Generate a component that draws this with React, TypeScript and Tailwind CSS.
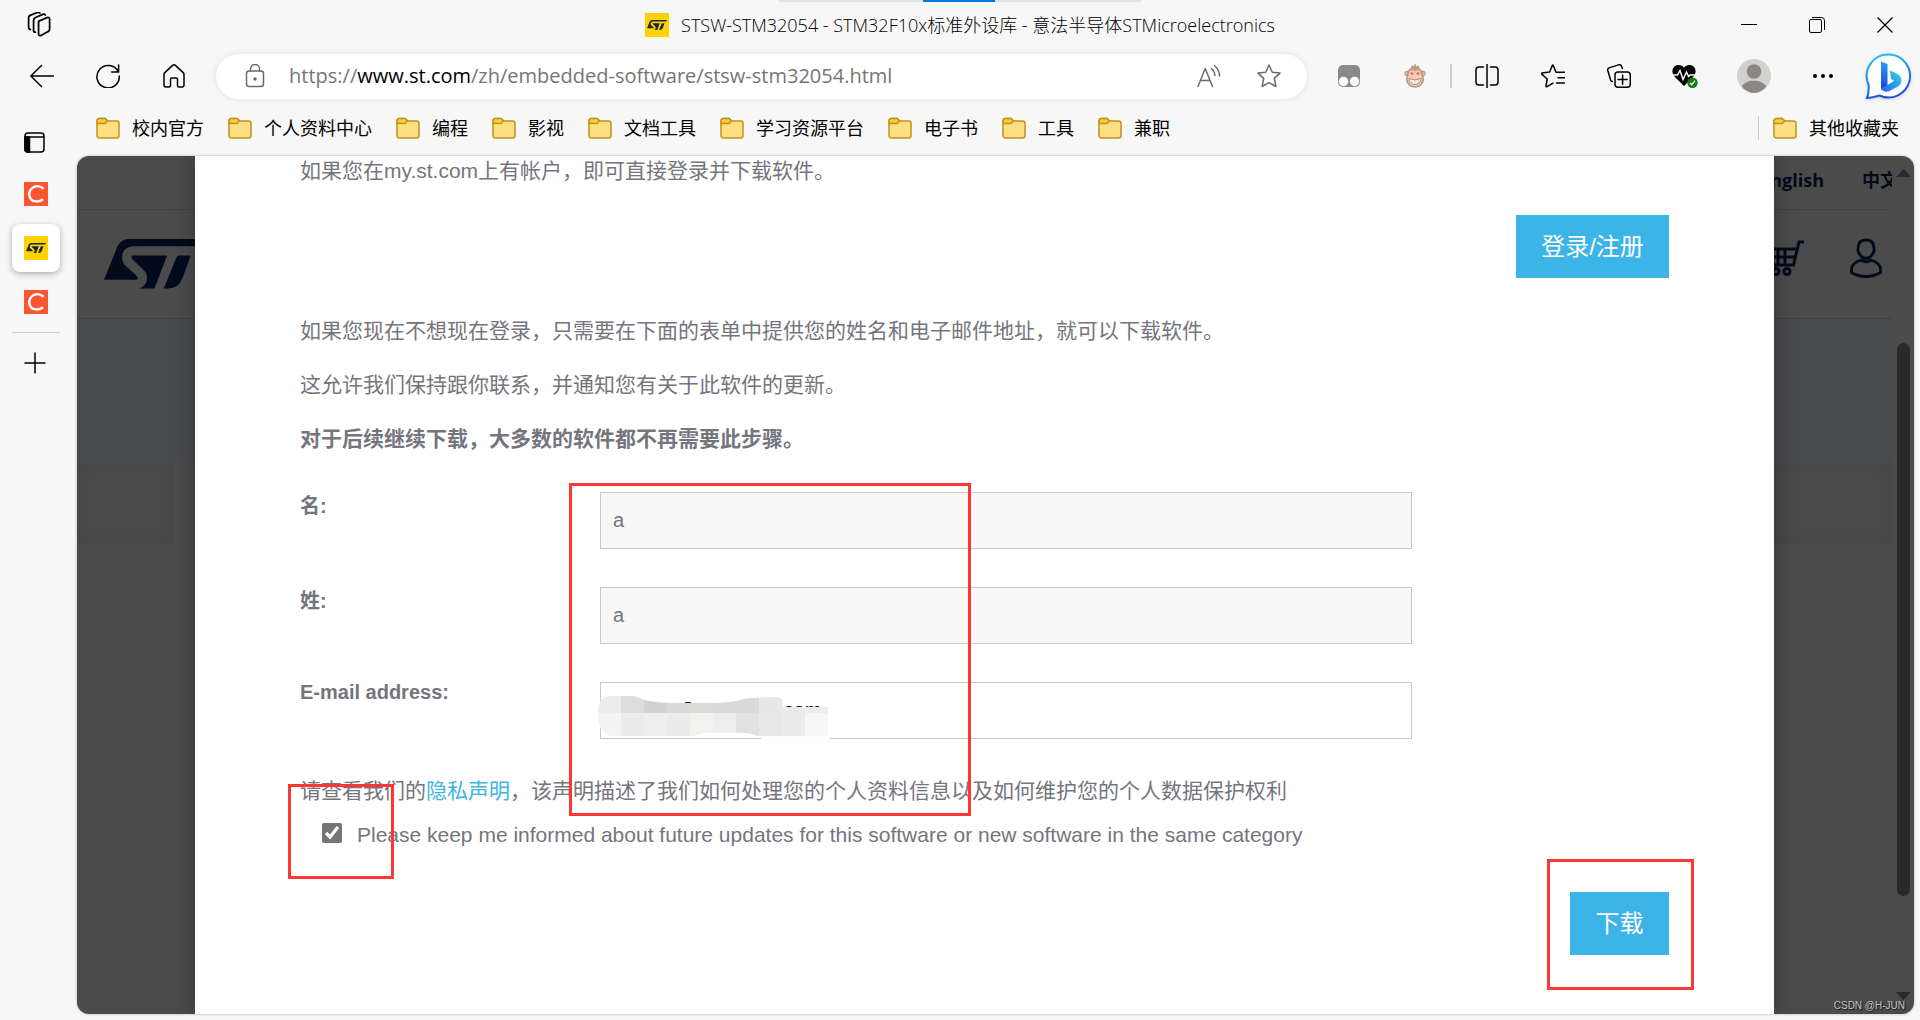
import React from "react";

const uiFont = "font-['Open_Sans','Noto_Sans_CJK_SC',sans-serif]";
const pageFont = "font-['Liberation_Sans','Noto_Sans_CJK_SC',sans-serif]";

const folders = ["校内官方", "个人资料中心", "编程", "影视", "文档工具", "学习资源平台", "电子书", "工具", "兼职"];

function FolderIcon() {
  return (
    <svg className="size-6 shrink-0" viewBox="0 0 24 24" fill="none" stroke="#c0921a" strokeWidth="1.5">
      <path d="M1 5a2.500 2.500 0 0 1 2.500-2.500H9l3 2.500h8.500A2.500 2.500 0 0 1 23 7.500v12a2.500 2.500 0 0 1-2.500 2.500h-17A2.500 2.500 0 0 1 1 19.500Z" fill="#ffdf84" />
      <path d="M1 5a2.500 2.500 0 0 1 2.500-2.500H9L11.500 5 9 7.500H1Z" fill="#fccb3d" />
    </svg>
  );
}

function Folder({ label }: { label: string }) {
  return (
    <a href="#" className="flex items-center gap-3 whitespace-nowrap text-lg leading-6 text-black">
      <FolderIcon />
      {label}
    </a>
  );
}

function StMark({ className, fill }: { className: string; fill: string }) {
  return (
    <svg className={className} viewBox="312 355 290 146" fill={fill}>
      <path d="M385 355H600L591 376H400C368 376 356 405 372 430L408 463Q416 474 405 474H312L350 380Q360 355 385 355Z" />
      <path d="M398 403H497L460 500H416C440 490 445 465 430 448L395 414Q388 403 398 403Z" />
      <path d="M532 403H566L542 470Q530 500 500 500H487L524 409Q526 403 532 403Z" />
    </svg>
  );
}

function StFavicon() {
  return (
    <span className="flex size-6 shrink-0 items-center justify-center bg-[#ffd200]">
      <StMark className="h-[10px] w-5" fill="#1c2540" />
    </span>
  );
}

function CFavicon() {
  return (
    <svg className="size-6" viewBox="0 0 24 24">
      <rect width="24" height="24" fill="#fc5531" />
      <path d="M18.800 6.200C16.500 4.200 12.500 3.600 9.500 5.200 6.300 7 5 10 5.300 13.200c.4 3.800 3.200 6 6.700 6.200 2.600.2 4.700-.4 6.300-1.700" fill="none" stroke="#fff" strokeWidth="2.400" strokeLinecap="round" />
    </svg>
  );
}

function ToolButton({ label, children }: { label: string; children: React.ReactNode }) {
  return (
    <button type="button" aria-label={label} className="flex h-12 w-[66px] shrink-0 items-center justify-center">
      {children}
    </button>
  );
}

function LineIcon({ children, className = "size-6", width = 1.5 }: { children: React.ReactNode; className?: string; width?: number }) {
  return (
    <svg className={className} viewBox="0 0 24 24" fill="none" stroke="currentColor" strokeWidth={width} strokeLinecap="round" strokeLinejoin="round">
      {children}
    </svg>
  );
}

function TitleBar() {
  return (
    <header className="relative flex h-[50px] shrink-0 items-center justify-between">
      <div className="absolute top-0 left-1/2 flex h-[2px] w-[362px] -translate-x-1/2 justify-center bg-[#e5e5e5]">
        <span className="ml-[-2px] w-[72px] bg-[#0078d7]" />
      </div>
      <button type="button" aria-label="工作区" className="flex h-full w-[78px] items-center justify-center">
        <LineIcon className="size-[26px]" width={1.600}>
          <path d="M11.600 8.600 19.400 5.200Q21.800 4.400 21.800 6.800V16Q21.800 17.400 20.400 18.100L13.800 21.600Q11.600 22.400 11.600 20V9.800Q11.600 8 13 7.800" />
          <path d="M8.600 18.600Q7 18.600 7 17V7.600Q7 6 8.400 5.300L15.400 2.200Q17.400 1.600 17.800 2.800" />
          <path d="M4 16.200Q2.400 15.800 2.400 14.200V5.200Q2.400 3.800 3.800 3.100L10 .6Q12.200 0 12.800 1" />
        </LineIcon>
      </button>
      <h1 className="absolute inset-x-0 mx-auto flex w-fit items-center gap-3 text-lg leading-6 font-light whitespace-nowrap text-black">
        <StFavicon />
        STSW-STM32054 - STM32F10x标准外设库 - 意法半导体STMicroelectronics
      </h1>
      <div className="flex pr-[2px]">
        <ToolButton label="最小化">
          <svg className="size-4" viewBox="0 0 16 16" stroke="#000"><path d="M0 7.500h16" /></svg>
        </ToolButton>
        <div className="px-[2px]">
          <ToolButton label="还原">
            <svg className="size-4" viewBox="0 0 16 16" fill="none" stroke="#000">
              <rect x=".5" y="2.500" width="12" height="13" rx="1.500" />
              <path d="M3 .5h9.500a3 3 0 0 1 3 3V13" />
            </svg>
          </ToolButton>
        </div>
        <ToolButton label="关闭">
          <svg className="size-4" viewBox="0 0 16 16" stroke="#000" strokeWidth="1.200"><path d="M.5.500l15 15M15.500.500l-15 15" /></svg>
        </ToolButton>
      </div>
    </header>
  );
}

function Toolbar() {
  return (
    <nav className="flex h-[52px] shrink-0 items-center pl-[9px] text-black">
      <ToolButton label="返回"><LineIcon><path d="M23.500 12H.8M11.500 1.500.8 12l10.700 10.500" /></LineIcon></ToolButton>
      <ToolButton label="刷新"><LineIcon><path d="M22.200 7.800A11.200 11.200 0 1 0 23.300 12M22.600 1v7h-7" /></LineIcon></ToolButton>
      <ToolButton label="主页">
        <LineIcon><path d="M10.600 1.400Q12 .2 13.400 1.400L21.200 8.600Q22 9.400 22 10.500V21Q22 23 20 23H17Q15.500 23 15.500 21.500V15.500Q15.500 14 14 14H10Q8.500 14 8.500 15.500V21.500Q8.500 23 7 23H4Q2 23 2 21V10.500Q2 9.400 2.800 8.600Z" /></LineIcon>
      </ToolButton>
      <div className="ml-[9px] flex h-[45px] min-w-0 flex-1 items-center rounded-full bg-white pr-[26px] pl-[27px] text-[#6b6b6b] shadow-[0_0_6px_rgba(0,0,0,0.1)]">
        <LineIcon>
          <rect x="3.500" y="7" width="17" height="15.500" rx="2.500" />
          <path d="M7.500 7V5a4.500 4.500 0 0 1 9 0v2" />
          <circle cx="12" cy="15" r="1" fill="currentColor" />
        </LineIcon>
        <div className="relative ml-[22px] min-w-0 flex-1 text-xl leading-7">
          <input aria-label="地址栏" readOnly defaultValue="https://www.st.com/zh/embedded-software/stsw-stm32054.html" className="w-full bg-transparent text-transparent outline-none" />
          <span aria-hidden="true" className="pointer-events-none absolute inset-0 whitespace-nowrap text-[#767676]">
            https://<span className="text-black">www.st.com</span>/zh/embedded-software/stsw-stm32054.html
          </span>
        </div>
        <button type="button" aria-label="大声朗读" className="mr-9">
          <LineIcon>
            <path d="M1 22.500 8.200 4.500 15.500 22.500M3.600 16.500h9.200M14.500 4.500q3 2.500 3.500 7M17.500 1.500q4.800 4 5 10.500" />
          </LineIcon>
        </button>
        <button type="button" aria-label="收藏此页">
          <LineIcon><path d="m12 1 3.300 7.200 7.700.9-5.700 5.300 1.600 8.100-6.900-3.900-6.900 3.900 1.600-8.100L1 9.100l7.700-.9Z" /></LineIcon>
        </button>
      </div>
      <div className="flex items-center pl-[9px]">
        <ToolButton label="扩展">
          <svg className="size-6" viewBox="0 0 24 24">
            <rect x="1" y="1" width="22" height="22" rx="5" fill="#8a8a8a" />
            <circle cx="6.500" cy="17.500" r="4.700" fill="#fff" />
            <circle cx="17.500" cy="17.500" r="4.700" fill="#fff" />
          </svg>
        </ToolButton>
        <ToolButton label="脚本">
          <svg className="size-6" viewBox="0 0 24 24">
            <path d="M8.500 4 9 1.500l2 1.500L12 .2 13.500 3l2-1.200L15.500 4" fill="#c79f8e" stroke="#a58a7d" strokeWidth=".6" />
            <circle cx="4" cy="9.500" r="2.300" fill="#ecc0a6" stroke="#b6917d" />
            <circle cx="20" cy="9.500" r="2.300" fill="#ecc0a6" stroke="#b6917d" />
            <path d="M12 3.500c5 0 7.600 2.800 7.600 6.800 0 1.700 1 2.700 1 5 0 4.600-3.800 8-8.600 8s-8.600-3.400-8.600-8c0-2.300 1-3.300 1-5C4.400 6.300 7 3.500 12 3.500Z" fill="#c99b86" stroke="#a58a7d" strokeWidth=".6" />
            <path d="M12 7.500C9.500 4.800 5.800 6.800 6 9.800c.1 1.700-1.200 2.900-1.200 5.200 0 4.200 3.200 7.200 7.200 7.200s7.200-3 7.200-7.200c0-2.300-1.300-3.500-1.200-5.200.2-3-3.500-5-6-2.300Z" fill="#f5cdb2" />
            <circle cx="9" cy="9.500" r="1.700" fill="#ff8f8f" /><circle cx="15" cy="9.500" r="1.700" fill="#ff8f8f" />
            <circle cx="9" cy="9.500" r=".7" fill="#e02d2d" /><circle cx="15" cy="9.500" r=".7" fill="#e02d2d" />
            <path d="M6 14.500q6 3 12 0c0 3.500-2.500 6-6 6s-6-2.500-6-6Z" fill="#fff" stroke="#96806f" strokeWidth=".9" />
            <path d="M9 16v4M12 16.500v4M15 16v4" stroke="#b5a79d" strokeWidth=".6" />
          </svg>
        </ToolButton>
        <span className="mx-[2px] h-6 w-[2px] bg-[#cfcfcf]" />
        <ToolButton label="拆分屏幕"><LineIcon><path d="M12 .5v23M8.500 3H4Q1 3 1 6v12q0 3 3 3h4.500M15.500 3H20q3 0 3 3v12q0 3-3 3h-4.500" /></LineIcon></ToolButton>
        <ToolButton label="收藏夹">
          <LineIcon><path d="M15 8.200 12.200 1.200Q11.800.6 11.400 1.200L8.600 8 1 9Q.2 9.500.8 10.100L6.200 15 5 22Q5 23.200 6 22.600L12 19.200M15 8.200h8.500M17 13.800h6.500M15.500 19h8" /></LineIcon>
        </ToolButton>
        <ToolButton label="集锦">
          <LineIcon>
            <path d="M5.300 17.600Q4 17.500 3.600 16L.8 6.500Q.3 4.600 2 3.900L11.500.9Q13.600.3 14.400 1.900L15.400 4.500" />
            <rect x="8" y="8" width="15.300" height="15.300" rx="3" />
            <path d="M15.600 11v9.200M11 15.600h9.200" />
          </LineIcon>
        </ToolButton>
        <ToolButton label="浏览器概要">
          <svg className="h-6 w-[26px]" viewBox="0 0 26 24">
            <path d="M12 22 2.500 12.500C-2 7 1.500 1 6.500 1c2.500 0 4.300 1 5.500 2.700C13.200 2 15 1 17.500 1c5 0 8.500 6 4 11.500Z" fill="#000" />
            <path d="M0 11h5.500l2.500-4.500 3 9 3.500-7.500 2 4.500 1.500-1.500h7" fill="none" stroke="#f7f7f7" strokeWidth="1.500" />
            <circle cx="20.500" cy="18.800" r="5.200" fill="#107c10" />
            <path d="m18 19 1.800 1.800L23 16.800" fill="none" stroke="#fff" strokeWidth="1.400" />
          </svg>
        </ToolButton>
        <div className="px-[3px]">
          <ToolButton label="个人资料">
            <svg className="size-[34px]" viewBox="0 0 34 34">
              <circle cx="17" cy="17" r="17" fill="#d3d1ce" />
              <circle cx="17" cy="12.500" r="7.300" fill="#8b8784" />
              <path d="M4.800 27.500C7 23.800 11.500 21.800 17 21.800s10 2 12.200 5.700A17 17 0 0 1 17 34 17 17 0 0 1 4.800 27.500Z" fill="#8b8784" />
            </svg>
          </ToolButton>
        </div>
        <ToolButton label="更多">
          <svg className="size-6" viewBox="0 0 24 24"><circle cx="4" cy="12" r="2" /><circle cx="12" cy="12" r="2" /><circle cx="20" cy="12" r="2" /></svg>
        </ToolButton>
        <button type="button" aria-label="Bing" className="flex h-12 w-16 items-center justify-center">
          <svg className="size-12 drop-shadow" viewBox="0 0 48 48">
            <defs>
              <linearGradient id="ring" x1="0" y1="0" x2=".3" y2="1"><stop offset="0" stopColor="#23cdf3" /><stop offset="1" stopColor="#1d51dc" /></linearGradient>
              <linearGradient id="stem" x1="0" y1="0" x2="0" y2="1"><stop offset="0" stopColor="#2a9df2" /><stop offset="1" stopColor="#1947d1" /></linearGradient>
              <linearGradient id="bowl" x1="0" y1="1" x2="1" y2="0"><stop offset="0" stopColor="#2362e8" /><stop offset=".6" stopColor="#28a8ee" /><stop offset="1" stopColor="#37e0c0" /></linearGradient>
            </defs>
            <path d="M25 2.500a21.500 21.500 0 1 1-9.500 41C11 44.800 7 45.800 3 46c1.700-4 2-9 1.500-13.500A21.500 21.500 0 0 1 25 2.500Z" fill="#fff" stroke="url(#ring)" strokeWidth="2" />
            <path d="M17 9.500 23.500 12v21.500L17 37.300Z" fill="url(#stem)" />
            <path d="M26 18.500 33.500 22q4 2 4 6.500 0 4-4 6.300l-8 4.200q-4 1.800-7.500-.7L17 37.300l13-8.500-3-2Z" fill="url(#bowl)" />
          </svg>
        </button>
      </div>
    </nav>
  );
}

function Bookmarks() {
  return (
    <nav className="flex h-[54px] shrink-0 items-center justify-between pr-[21px] pb-[2px] pl-24">
      <div className="flex gap-6">
        {folders.map((name) => <Folder key={name} label={name} />)}
      </div>
      <div className="flex items-center border-l border-[#cfcfcf] pl-[14px]">
        <Folder label="其他收藏夹" />
      </div>
    </nav>
  );
}

function SideTabs() {
  return (
    <aside className="-mt-[26px] flex w-[77px] shrink-0 flex-col items-start pl-3">
      <button type="button" aria-label="标签页操作菜单" className="flex h-6 w-[45px] items-center justify-center">
        <svg className="size-[21px]" viewBox="0 0 21 21" fill="none" stroke="#000" strokeWidth="1.500">
          <rect x="1" y="1" width="19" height="19" rx="3" />
          <path d="M1 5h19" />
          <path d="M1 5h4.500v15H3.500Q1 20 1 17.500Z" fill="#000" />
        </svg>
      </button>
      <button type="button" aria-label="CSDN" className="mt-4 flex size-12 items-center justify-center"><CFavicon /></button>
      <button type="button" aria-label="STMicroelectronics" className="mt-[6px] flex size-12 items-center justify-center rounded-lg bg-white shadow-[0_2px_6px_rgba(0,0,0,0.3)]"><StFavicon /></button>
      <button type="button" aria-label="CSDN" className="mt-[6px] flex size-12 items-center justify-center"><CFavicon /></button>
      <span className="mt-[6px] h-px w-12 bg-[#cccccc]" />
      <button type="button" aria-label="新建标签页" className="mt-[6px] flex h-12 w-[46px] items-center justify-center">
        <svg className="size-6" viewBox="0 0 24 24" stroke="#000" strokeWidth="1.500"><path d="M12 1.500v21M1.500 12h21" /></svg>
      </button>
    </aside>
  );
}

function Backdrop() {
  return (
    <div className="text-[#020b1c]">
      <div className={`flex h-[54px] items-center justify-end overflow-hidden border-b border-[#434343] text-lg leading-5 font-bold whitespace-nowrap ${uiFont}`}>
        <a href="#" className="pb-[6px]">English</a>
        <a href="#" className="-mr-[6px] ml-[38px] pb-[6px]">中文</a>
      </div>
      <div className="flex h-[109px] items-center justify-between border-b border-[#3e4244] pr-[10px] pl-[27px]">
        <StMark className="h-[50px] w-[99px]" fill="#020b1c" />
        <div className="flex items-center gap-[46px] pb-3">
          <svg className="h-9 w-10" viewBox="0 0 40 36" fill="none" stroke="#020b1c" strokeWidth="3">
            <path d="M40 2h-5l-5.500 23H10L4 9h28" />
            <path d="M6 17h25M14 9v16M21 9v16" />
            <circle cx="12" cy="31.500" r="3" /><circle cx="23" cy="31.500" r="3" />
          </svg>
          <svg className="h-10 w-8" viewBox="0 0 32 40" fill="none" stroke="#020b1c" strokeWidth="2.800">
            <path d="M8.500 8Q9 2 16 2t7.500 6l.8 4Q22 20 16 20.500 10 20 7.700 12Z" />
            <path d="M11 22Q2 25 1.500 31v3.500Q8 38.500 16 38.500T30.500 34.500V31Q30 25 21 22q-5 3.500-10 0Z" />
          </svg>
        </div>
      </div>
      <div className="h-36 bg-[#494a4c]" />
      <div className="flex justify-between">
        <span className="h-[81px] w-24 bg-[#4a4a4a] shadow-[inset_0_0_16px_rgba(0,0,0,0.06)]" />
        <span className="h-[81px] w-[118px] bg-[#4a4a4a] shadow-[inset_0_0_16px_rgba(0,0,0,0.06)]" />
      </div>
    </div>
  );
}

const mosaicTop = ["#ededed", "#dcdcdc", "#d2d2d2", "#dadada", "#dcdbd9", "#d9d9db", "#dadadb", "#e7e7e7", "#e9eaeb", "#ecedef"];
const mosaicBottom = ["#f4f4f4", "#ebebeb", "#eeeeee", "#ebebeb", "#f2f2ef", "#eeeeee", "#e2e2e2", "#e8e8e8", "#ebebeb", "#f7f7f7"];

function Mosaic() {
  return (
    <svg aria-hidden="true" className="pointer-events-none absolute top-[14px] -left-[2px] h-[45px] w-[232px]" viewBox="0 0 232 45">
      <clipPath id="smudge">
        <path d="M0 14Q0 3 10 0H36L50 5 70 7H110Q135 7 145 3 160 1 180 1 186 3 184 11H230V42H162Q155 37 145 37H105L95 40H12Q0 34 0 24Z" />
      </clipPath>
      <path d="M163 37H232V44H163Z" fill="#fdfdfd" />
      <g clipPath="url(#smudge)">
        {mosaicTop.map((c, i) => <rect key={i} x={i * 23} y="0" width="23" height="17" fill={c} />)}
        {mosaicBottom.map((c, i) => <rect key={i} x={i * 23} y="17" width="23" height="23" fill={c} />)}
      </g>
      <path d="M87 6.500h6" stroke="#222" />
    </svg>
  );
}

const inputClass = "h-[57px] w-full border border-[#c8c8c8] px-3 text-xl text-[#75757d] outline-none";
const mark = "pointer-events-none absolute border-[3px] border-[#fc3737]";
const cta = "bg-[#3cb4e7] text-2xl text-white h-[63px]";

function DownloadDialog() {
  return (
    <section role="dialog" aria-label="获取软件" className={`w-[87%] bg-white px-[105px] pt-px text-[21px] leading-7 text-[#75757d] shadow-[0_0_20px_rgba(0,0,0,0.3)] ${pageFont}`}>
      <p>如果您在my.st.com上有帐户，即可直接登录并下载软件。</p>
      <div className="mt-[30px] flex justify-end">
        <button type="button" className={`${cta} w-[153px]`}>登录/注册</button>
      </div>
      <p className="mt-[39px]">如果您现在不想现在登录，只需要在下面的表单中提供您的姓名和电子邮件地址，就可以下载软件。</p>
      <p className="mt-[26px]">这允许我们保持跟你联系，并通知您有关于此软件的更新。</p>
      <p className="mt-[26px] font-bold">对于后续继续下载，大多数的软件都不再需要此步骤。</p>
      <form className="mt-[39px]" onSubmit={(e) => e.preventDefault()}>
        <div className="grid grid-cols-[300px_1fr] gap-y-[38px] pr-[257px]">
          <label htmlFor="first" className="text-xl leading-7 font-bold">名:</label>
          <div className="relative">
            <input id="first" defaultValue="a" className={`${inputClass} bg-[#f8f8f8]`} />
            <span className={`${mark} -top-[9px] -left-[31px] z-10 h-[333px] w-[402px]`} />
          </div>
          <label htmlFor="last" className="text-xl leading-7 font-bold">姓:</label>
          <input id="last" defaultValue="a" className={`${inputClass} bg-[#f8f8f8]`} />
          <label htmlFor="email" className="text-xl leading-5 font-bold">E-mail address:</label>
          <div className="relative">
            <input id="email" defaultValue=".com" className="h-[57px] w-full border border-[#c8c8c8] pl-[177px] text-xl text-black outline-none" />
            <Mosaic />
          </div>
        </div>
        <p className="mt-[38px]">
          请查看我们的<a href="#" className="text-[#3cb4e7]">隐私声明</a>，该声明描述了我们如何处理您的个人资料信息以及如何维护您的个人数据保护权利
        </p>
        <div className="relative mt-4 flex items-start pl-[22px]">
          <input id="updates" type="checkbox" defaultChecked className="mt-[2px] size-5 accent-[#767676]" />
          <label htmlFor="updates" className="ml-[15px] leading-7">Please keep me informed about future updates for this software or new software in the same category</label>
          <span className={`${mark} -top-[37px] -left-3 h-[95px] w-[106px]`} />
        </div>
        <div className="mt-[43px] flex justify-end">
          <div className="relative">
            <button type="submit" className={`${cta} w-[99px]`}>下载</button>
            <span className={`${mark} -top-[33px] -right-[25px] h-[131px] w-[147px]`} />
          </div>
        </div>
      </form>
    </section>
  );
}

function Scrollbar() {
  return (
    <div className="flex w-[22px] shrink-0 flex-col items-center pt-[13px] pb-[14px]">
      <svg className="h-2 w-[15px]" viewBox="0 0 15 8" fill="#292929"><path d="M0 8 7.500 0 15 8Z" /></svg>
      <div className="flex w-full flex-1 flex-col items-center">
        <span className="flex-[166]" />
        <span className="w-[13px] flex-[553] rounded-full bg-[#292929]" />
        <span className="flex-[96]" />
      </div>
      <svg className="h-2 w-[15px]" viewBox="0 0 15 8" fill="#292929"><path d="M0 0 7.500 8 15 0Z" /></svg>
    </div>
  );
}

export default function App() {
  return (
    <div lang="zh-CN" className={`flex min-h-screen flex-col bg-[#f7f7f7] ${uiFont}`}>
      <TitleBar />
      <Toolbar />
      <Bookmarks />
      <div className="flex flex-1 pr-[6px] pb-[6px]">
        <SideTabs />
        <main className="relative flex min-w-0 flex-1 overflow-hidden rounded-xl bg-[#4b4b4b] shadow-[0_0_3px_rgba(0,0,0,0.3)]">
          <div className="relative min-w-0 flex-1 overflow-hidden">
            <Backdrop />
            <div className="absolute inset-0 flex justify-center">
              <DownloadDialog />
            </div>
          </div>
          <Scrollbar />
          <span className="absolute right-[9px] bottom-0 font-['Liberation_Sans',sans-serif] text-[10px] leading-4 text-[#c4c4c4] [text-shadow:1px_1px_1px_#111]">CSDN @H-JUN</span>
        </main>
      </div>
    </div>
  );
}
